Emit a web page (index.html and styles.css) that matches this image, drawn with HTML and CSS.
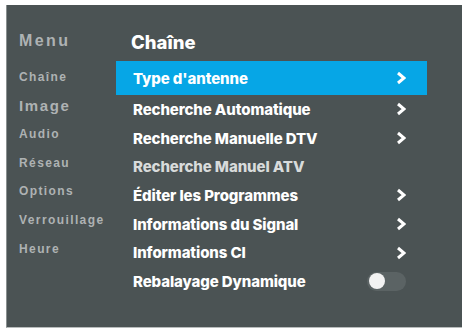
FILE: index.html
```html
<!DOCTYPE html>
<html>
<head>
    <meta name="viewport" content="width=device-width, initial-scale=1.0">
    <link rel="stylesheet" href="styles.css">
</head>
<body>
<div class="screen">
    <div class="sidebar">
        <div class="menu-title">Menu</div>
        <div class="side-item">Chaîne</div>
        <div class="side-item big">Image</div>
        <div class="side-item">Audio</div>
        <div class="side-item">Réseau</div>
        <div class="side-item">Options</div>
        <div class="side-item">Verrouillage</div>
        <div class="side-item">Heure</div>
    </div>

    <div class="main">
        <h1 class="title">Chaîne</h1>
        <div class="row active">
            <span>Type d'antenne</span>
            <svg class="chevron" width="10" height="14" viewBox="0 0 10 14"><polyline points="2,2 8,7 2,12" fill="none" stroke="#fff" stroke-width="3"/></svg>
        </div>
        <div class="row">
            <span>Recherche Automatique</span>
            <svg class="chevron" width="10" height="14" viewBox="0 0 10 14"><polyline points="2,2 8,7 2,12" fill="none" stroke="#fff" stroke-width="3"/></svg>
        </div>
        <div class="row">
            <span>Recherche Manuelle DTV</span>
            <svg class="chevron" width="10" height="14" viewBox="0 0 10 14"><polyline points="2,2 8,7 2,12" fill="none" stroke="#fff" stroke-width="3"/></svg>
        </div>
        <div class="row disabled">
            <span>Recherche Manuel ATV</span>
        </div>
        <div class="row">
            <span>Éditer les Programmes</span>
            <svg class="chevron" width="10" height="14" viewBox="0 0 10 14"><polyline points="2,2 8,7 2,12" fill="none" stroke="#fff" stroke-width="3"/></svg>
        </div>
        <div class="row">
            <span>Informations du Signal</span>
            <svg class="chevron" width="10" height="14" viewBox="0 0 10 14"><polyline points="2,2 8,7 2,12" fill="none" stroke="#fff" stroke-width="3"/></svg>
        </div>
        <div class="row">
            <span>Informations CI</span>
            <svg class="chevron" width="10" height="14" viewBox="0 0 10 14"><polyline points="2,2 8,7 2,12" fill="none" stroke="#fff" stroke-width="3"/></svg>
        </div>
        <div class="row">
            <span>Rebalayage Dynamique</span>
            <div class="toggle"><div class="knob"></div></div>
        </div>
    </div>
</div>
</body>
</html>
```

FILE: styles.css
```css
body {
    margin: 0;
    background: #ffffff;
    font-family: "Liberation Sans", Arial, sans-serif;
}

.screen {
    margin: 5px 0 0 6px;
    height: 323px;
    background-color: #4b5354;
    border-left: 1px solid #8a9090;
    border-bottom: 1px solid #b8bcbc;
    display: flex;
    box-sizing: border-box;
}

.sidebar {
    width: 109px;
    padding: 27px 0 0 12px;
    box-sizing: border-box;
    color: #aeb2b3;
    font-weight: bold;
}

.menu-title {
    font-size: 16px;
    letter-spacing: 2.4px;
    height: 31px;
    line-height: 18px;
}

.side-item {
    font-size: 12px;
    letter-spacing: 1.4px;
    height: 28.6px;
    line-height: 28px;
}

.side-item.big {
    font-size: 15px;
    letter-spacing: 1.6px;
}

.main {
    width: 311px;
    padding-top: 28px;
}

.title {
    margin: 0 0 9px 15px;
    font-family: Inter, "Liberation Sans", sans-serif;
    font-size: 18.5px;
    font-weight: 800;
    line-height: 19px;
    color: #ffffff;
}

.row {
    height: 28.7px;
    display: flex;
    align-items: center;
    justify-content: space-between;
    padding: 0 21px 0 17px;
    color: #ffffff;
    font-family: Inter, "Liberation Sans", sans-serif;
    font-size: 15px;
    font-weight: 800;
    letter-spacing: -0.1px;
}

.row.active {
    height: 34px;
    background-color: #06a6e6;
}

.row.disabled {
    color: #d8dbdb;
}

.toggle {
    width: 39px;
    height: 19px;
    border-radius: 10px;
    background-color: #5b6364;
    display: flex;
    align-items: center;
    padding-left: 2px;
    box-sizing: border-box;
}

.knob {
    width: 16px;
    height: 16px;
    border-radius: 50%;
    background-color: #f2f2f2;
}
```
